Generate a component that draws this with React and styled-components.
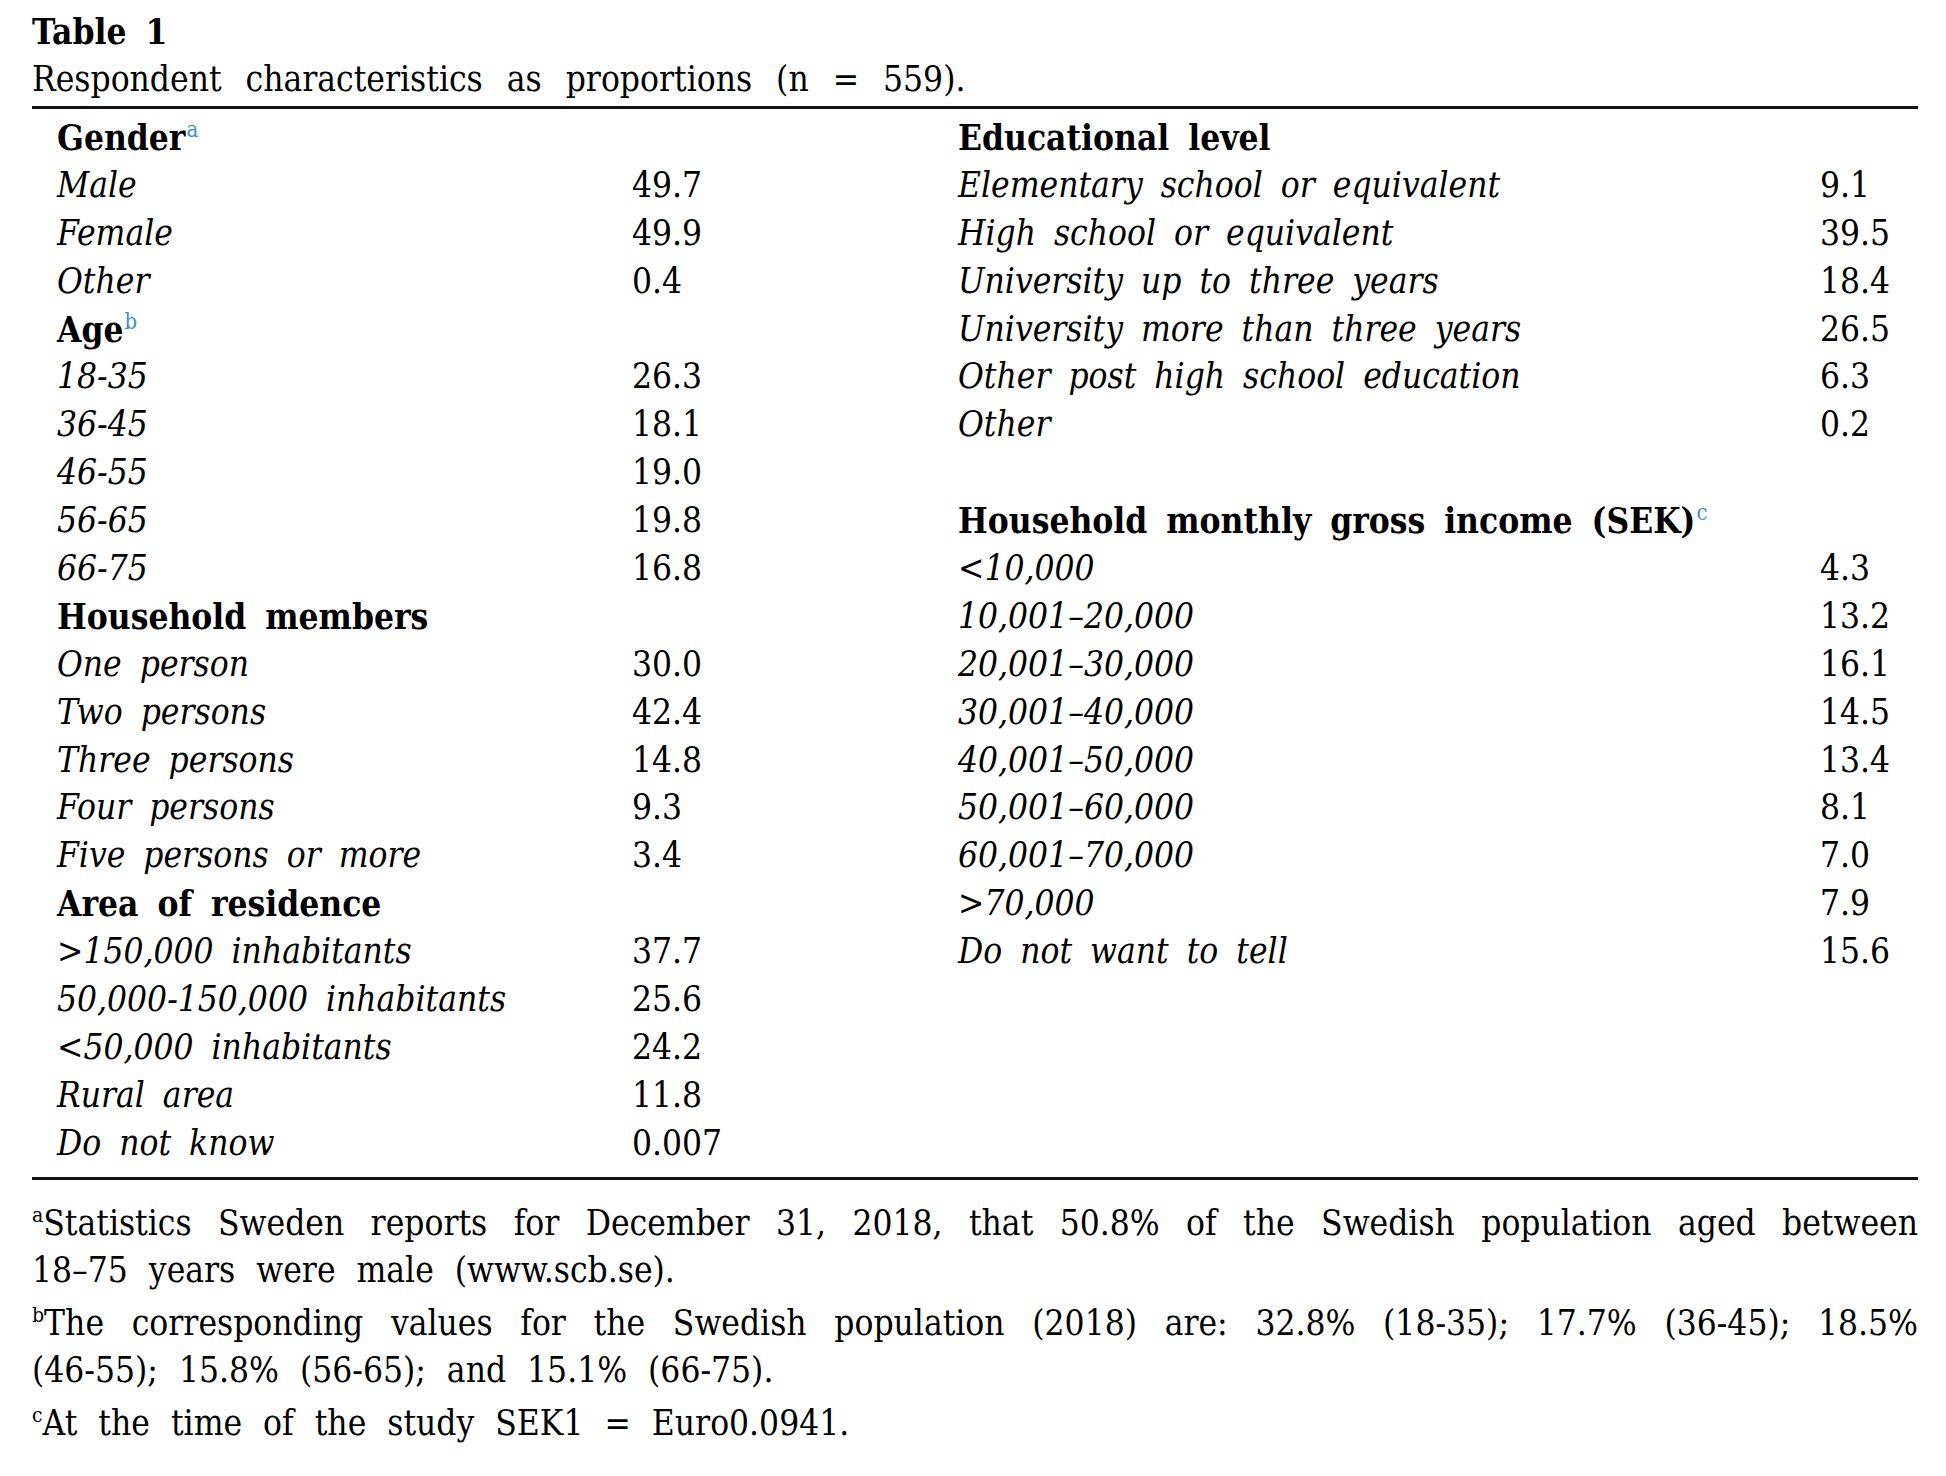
import React from 'react';
import styled, { createGlobalStyle } from 'styled-components';

const GlobalStyle = createGlobalStyle`
  html, body {
    margin: 0;
    padding: 0;
    background: #ffffff;
  }
  body {
    font-family: "DejaVu Serif Condensed", "DejaVu Serif", serif;
    font-stretch: condensed;
    color: #000;
  }
`;

const Page = styled.div`
  width: 1886px;
  padding: 8px 0 0 32px;
  font-size: 35px;
  word-spacing: 8px;
`;

const Title = styled.h1`
  margin: 0;
  font-size: 35px;
  font-weight: bold;
  line-height: 47px;
`;

const Caption = styled.p`
  margin: 0 0 3px;
  line-height: 48px;
  word-spacing: 14px;
`;

const TableBox = styled.div`
  border-top: 3px solid #111;
  border-bottom: 3px solid #111;
  padding: 5px 0 9px 25px;
  display: flex;
`;

const Column = styled.div`
  width: ${(p) => p.$width}px;
  display: flex;
  flex-direction: column;
`;

const Row = styled.div`
  display: grid;
  grid-template-columns: ${(p) => p.$labelWidth}px 1fr;
  height: 47.9px;
  line-height: 47.9px;
  white-space: nowrap;
`;

const Heading = styled.span`
  font-weight: bold;
`;

const Label = styled.span`
  font-style: italic;
`;

const Value = styled.span``;

const Mark = styled.sup`
  font-size: ${(p) => (p.$link ? '22px' : '21px')};
  line-height: 0;
  vertical-align: 13px;
  color: ${(p) => (p.$link ? '#3f8fc2' : '#000')};
  margin-left: ${(p) => (p.$link ? '1px' : '0')};
  font-weight: normal;
`;

const Notes = styled.div`
  padding-top: 20px;
  font-size: 35px;
  word-spacing: 11px;
`;

const Note = styled.div`
  margin-bottom: 6px;
`;

const NoteLine = styled.div`
  line-height: 47px;
  text-align: ${(p) => (p.$justify ? 'justify' : 'left')};
  text-align-last: ${(p) => (p.$justify ? 'justify' : 'left')};
  white-space: nowrap;
`;

const left = [
  { head: 'Gender', mark: 'a' },
  { label: 'Male', value: '49.7' },
  { label: 'Female', value: '49.9' },
  { label: 'Other', value: '0.4' },
  { head: 'Age', mark: 'b' },
  { label: '18-35', value: '26.3' },
  { label: '36-45', value: '18.1' },
  { label: '46-55', value: '19.0' },
  { label: '56-65', value: '19.8' },
  { label: '66-75', value: '16.8' },
  { head: 'Household members' },
  { label: 'One person', value: '30.0' },
  { label: 'Two persons', value: '42.4' },
  { label: 'Three persons', value: '14.8' },
  { label: 'Four persons', value: '9.3' },
  { label: 'Five persons or more', value: '3.4' },
  { head: 'Area of residence' },
  { label: '>150,000 inhabitants', value: '37.7' },
  { label: '50,000-150,000 inhabitants', value: '25.6' },
  { label: '<50,000 inhabitants', value: '24.2' },
  { label: 'Rural area', value: '11.8' },
  { label: 'Do not know', value: '0.007' },
];

const right = [
  { head: 'Educational level' },
  { label: 'Elementary school or equivalent', value: '9.1' },
  { label: 'High school or equivalent', value: '39.5' },
  { label: 'University up to three years', value: '18.4' },
  { label: 'University more than three years', value: '26.5' },
  { label: 'Other post high school education', value: '6.3' },
  { label: 'Other', value: '0.2' },
  { blank: true },
  { head: 'Household monthly gross income (SEK)', mark: 'c' },
  { label: '<10,000', value: '4.3' },
  { label: '10,001–20,000', value: '13.2' },
  { label: '20,001–30,000', value: '16.1' },
  { label: '30,001–40,000', value: '14.5' },
  { label: '40,001–50,000', value: '13.4' },
  { label: '50,001–60,000', value: '8.1' },
  { label: '60,001–70,000', value: '7.0' },
  { label: '>70,000', value: '7.9' },
  { label: 'Do not want to tell', value: '15.6' },
];

const TableRow = ({ row, labelWidth }) => (
  <Row $labelWidth={labelWidth}>
    {row.head ? (
      <Heading>
        {row.head}
        {row.mark && <Mark $link>{row.mark}</Mark>}
      </Heading>
    ) : (
      <Label>{row.label || '\u00a0'}</Label>
    )}
    <Value>{row.value || ''}</Value>
  </Row>
);

const App = () => {
  return (
    <Page>
      <GlobalStyle />
      <Title>Table 1</Title>
      <Caption>Respondent characteristics as proportions (n = 559).</Caption>
      <TableBox>
        <Column $width={901}>
          {left.map((row, i) => (
            <TableRow key={i} row={row} labelWidth={575} />
          ))}
        </Column>
        <Column $width={960}>
          {right.map((row, i) => (
            <TableRow key={i} row={row} labelWidth={862} />
          ))}
        </Column>
      </TableBox>
      <Notes>
        <Note>
          <NoteLine $justify>
            <Mark>a</Mark>Statistics Sweden reports for December 31, 2018, that 50.8% of the Swedish population aged between
          </NoteLine>
          <NoteLine>18–75 years were male (www.scb.se).</NoteLine>
        </Note>
        <Note>
          <NoteLine $justify>
            <Mark>b</Mark>The corresponding values for the Swedish population (2018) are: 32.8% (18-35); 17.7% (36-45); 18.5%
          </NoteLine>
          <NoteLine>(46-55); 15.8% (56-65); and 15.1% (66-75).</NoteLine>
        </Note>
        <Note>
          <NoteLine>
            <Mark>c</Mark>At the time of the study SEK1 = Euro0.0941.
          </NoteLine>
        </Note>
      </Notes>
    </Page>
  );
};

export default App;
